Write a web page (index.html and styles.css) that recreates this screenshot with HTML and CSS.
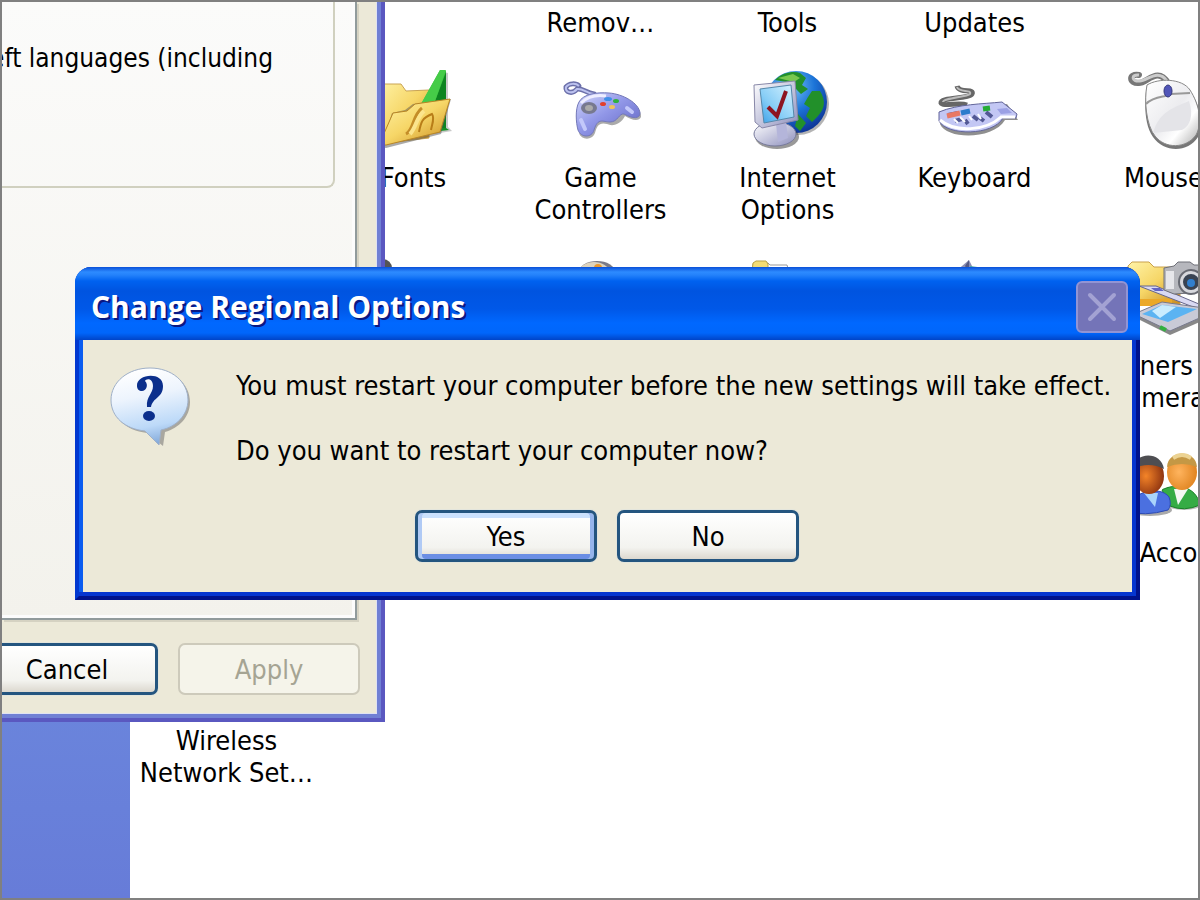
FILE: index.html
```html
<!DOCTYPE html>
<html lang="en">
<head>
<meta charset="utf-8">
<title>Change Regional Options</title>
<link rel="stylesheet" href="styles.css">
</head>
<body>
<div class="desktop">
  <div class="explorer">
    <aside class="task-pane"></aside>
    <main class="folder-view">
      <ul class="icon-grid">
        <li></li><li></li>
        <li class="item scrolled"><span class="label">Remov…</span></li>
        <li class="item scrolled"><span class="label">Tools</span></li>
        <li class="item scrolled"><span class="label">Updates</span></li>
        <li></li>

        <li></li>
        <li class="item">
          <svg class="icon" viewBox="0 0 80 80">
            <defs>
              <linearGradient id="fold" x1="0" y1="0" x2="1" y2="1"><stop offset="0" stop-color="#fff3a8"/><stop offset=".5" stop-color="#f6d667"/><stop offset="1" stop-color="#c98a1c"/></linearGradient>
              <linearGradient id="green" x1="0" y1="0" x2="1" y2="1"><stop offset="0" stop-color="#5ee05a"/><stop offset="1" stop-color="#0b8a1c"/></linearGradient>
            </defs>
            <path d="M70 2 74 3V57L78 61 60 64 68 56V30H46Z" fill="#777" opacity=".4"/>
            <path d="M2 14H27L32 21 55 20V68L4 74Z" fill="url(#fold)" stroke="#c9a455"/>
            <path d="M66 0 72 1V58L75 60 58 62 67 56V24L60 34H47Z" fill="url(#green)"/>
            <path d="M60 34 72 2V58H60Z" fill="#0d8420"/>
            <path d="M66 0H72L60 34H47Z" fill="#45cc48"/>
            <path d="M8 77 12 62 18 43 31 40 39 34 77 29 67 64 12 78Z" fill="#555" opacity=".5"/>
            <path d="M5 75 19 43 33 41 41 34 76 29 66 62 12 75Z" fill="url(#fold)" stroke="#b98625"/>
            <path d="M32 64C40 60 38 46 48 38" fill="none" stroke="#c48d28" stroke-width="3"/>
            <path d="M45 62C47 52 48 48 58 44C61 48 58 54 57 60" fill="none" stroke="#b87d18" stroke-width="2"/>
            <path d="M36 64C42 58 42 48 50 41" fill="none" stroke="#fbe48c" stroke-width="4"/>
          </svg>
          <span class="label">Fonts</span>
        </li>
        <li class="item">
          <svg class="icon" viewBox="0 0 80 80">
            <defs><linearGradient id="pad" x1="0" y1="0" x2="1" y2="1"><stop offset="0" stop-color="#d4d8fa"/><stop offset=".45" stop-color="#9298e8"/><stop offset="1" stop-color="#5c60c0"/></linearGradient></defs>
            <path d="M20 30C30 22 52 22 64 28C74 32 81 42 80 47C78 52 70 50 64 46C60 54 52 57 46 54C38 52 36 56 34 63C31 71 20 70 18 63Z" fill="#555" opacity=".5"/>
            <path d="M33 24C25 23 22 18 16 19C11 25 4 22 5 17C8 13 15 13 18 16" fill="none" stroke="#6c70aa" stroke-width="5" stroke-linecap="round"/>
            <path d="M33 24C25 23 22 18 16 19C11 25 4 22 5 17C8 13 15 13 18 16" fill="none" stroke="#bcc2ef" stroke-width="2"/>
            <path d="M18 32C22 24 36 22 48 23C62 24 78 33 79 43C79 49 72 49 63 44C58 43 57 52 49 52C42 52 37 47 33 60C31 68 20 68 17 60C15 53 14 39 18 32Z" fill="url(#pad)" stroke="#7378b8"/>
            <path d="M20 33C28 25 38 25 45 26" fill="none" stroke="#eef" stroke-width="3"/>
            <ellipse cx="28" cy="38" rx="8" ry="6" fill="#77798f"/><ellipse cx="28" cy="38" rx="4" ry="3" fill="#aaa"/>
            <ellipse cx="42" cy="34" rx="3" ry="2" fill="#e2402c"/><ellipse cx="47" cy="29" rx="4" ry="2" fill="#3f8fe8"/><ellipse cx="55" cy="31" rx="3" ry="2" fill="#2fb13f"/><ellipse cx="51" cy="37" rx="3" ry="2" fill="#f0c45c"/>
            <path d="M20 50 24 59M66 38 71 42" stroke="#c3c8fa" stroke-width="4" stroke-linecap="round"/>
          </svg>
          <span class="label">Game<br>Controllers</span>
        </li>
        <li class="item">
          <svg class="icon" viewBox="0 0 80 80">
            <defs>
              <radialGradient id="globe" cx=".4" cy=".25" r=".8"><stop offset="0" stop-color="#7cc8f8"/><stop offset=".5" stop-color="#1c74d8"/><stop offset="1" stop-color="#0c2f90"/></radialGradient>
              <linearGradient id="screen" x1="1" y1="0" x2="0" y2="1"><stop offset="0" stop-color="#d9f3ff"/><stop offset=".6" stop-color="#86cdf6"/><stop offset="1" stop-color="#3a9fe8"/></linearGradient>
              <linearGradient id="metal" x1="0" y1="0" x2="1" y2="1"><stop offset="0" stop-color="#fff"/><stop offset="1" stop-color="#8d8fbd"/></linearGradient>
            </defs>
            <circle cx="50" cy="34" r="31" fill="#444" opacity=".4"/>
            <circle cx="48" cy="32" r="31" fill="url(#globe)"/>
            <path d="M27 10C35 2 46 1 52 3L58 8 54 15 60 19 53 24 48 19 38 12ZM64 21 72 21C78 31 77 38 70 46L64 52 58 46 62 38 56 34 60 27ZM50 44 58 53 52 61 47 56Z" fill="#22902a"/>
            <path d="M30 8 45 4 52 8 46 12Z" fill="#79c850"/>
            <ellipse cx="29" cy="67" rx="22" ry="12" fill="#333" opacity=".5"/>
            <ellipse cx="27" cy="64" rx="21" ry="12" fill="url(#metal)" stroke="#777a9b"/>
            <path d="M28 54 38 52 40 68 30 72Z" fill="#b4b5da"/>
            <path d="M6 15 47 11 50 50 14 58 7 52Z" fill="url(#metal)" stroke="#8888a8"/>
            <path d="M12 19 43 15 46 47 16 53Z" fill="url(#screen)" stroke="#58a"/>
            <path d="M20 37 29 46 38 21" fill="none" stroke="#8d1420" stroke-width="4"/>
          </svg>
          <span class="label">Internet<br>Options</span>
        </li>
        <li class="item">
          <svg class="icon" viewBox="0 0 80 80">
            <path d="M22 16C24 24 40 18 37 24C34 29 5 27 6 33C8 37 24 32 32 35" fill="none" stroke="#666" stroke-width="5"/>
            <path d="M22 17C24 23 37 19 35 24C32 27 8 28 8 32" fill="none" stroke="#bbb" stroke-width="2"/>
            <path d="M6 43C25 38 50 39 72 34L83 50 70 50C58 70 12 70 5 54Z" fill="#444" opacity=".6"/>
            <path d="M4 42C23 34 48 34 67 32L82 44 81 48 68 48C58 66 12 66 4 51Z" fill="#c3c7f4" stroke="#62659a"/>
            <path d="M5 50C20 63 51 61 66 47L80 47" fill="none" stroke="#fff" stroke-width="3"/>
            <path d="M13 45 23 43M20 51 27 49M38 46 43 50M51 42 57 47M30 50 33 54M45 48 49 51" stroke="#535994" stroke-width="4"/>
            <path d="M12 46 25 43" stroke="#e97864" stroke-width="5"/><path d="M26 43 35 41" stroke="#2b7ccc" stroke-width="5"/><path d="M48 39 55 38" stroke="#25ad35" stroke-width="5"/>
            <path d="M19 49 23 53M25 47 30 52M34 46 37 50M43 44 46 49" stroke="#fff" stroke-width="2"/>
            <path d="M62 39 72 38 77 43 66 44Z" fill="#9ba0e4"/>
          </svg>
          <span class="label">Keyboard</span>
        </li>
        <li class="item">
          <svg class="icon" viewBox="0 0 80 80">
            <defs><linearGradient id="shell" x1="0" y1="0" x2="1" y2="1"><stop offset="0" stop-color="#fff"/><stop offset=".5" stop-color="#ececef"/><stop offset=".7" stop-color="#fff"/><stop offset="1" stop-color="#aaa"/></linearGradient></defs>
            <path d="M44 13C34 -4 23 13 15 13C5 14 4 3 15 5" fill="none" stroke="#777" stroke-width="6" stroke-linecap="round"/>
            <path d="M43 11C34 -2 23 11 16 11C7 12 7 4 15 5" fill="none" stroke="#ccc" stroke-width="3"/>
            <path d="M23 15C34 8 60 10 67 22C76 36 80 54 74 67C64 83 40 83 29 67C20 55 20 30 23 15Z" fill="#777"/>
            <path d="M23 15C34 8 58 8 66 20C75 34 79 52 72 65C62 79 41 79 31 66C22 55 20 30 23 15Z" fill="url(#shell)" stroke="#888"/>
            <path d="M22 34C31 25 41 28 47 24L66 23" fill="none" stroke="#999" stroke-width="2"/>
            <path d="M29 63C35 43 46 39 65 31C70 46 66 56 58 60Z" fill="#e4e4e8"/>
            <ellipse cx="44" cy="21" rx="4" ry="6" fill="#5155b8" stroke="#33367c"/>
          </svg>
          <span class="label">Mouse</span>
        </li>

        <li></li>
        <li class="item"><svg class="icon" viewBox="0 0 80 80"><circle cx="9" cy="10" r="9" fill="#555"/></svg></li>
        <li class="item"><svg class="icon" viewBox="0 0 80 80"><ellipse cx="36" cy="14" rx="18" ry="11" fill="#7b7a86"/><ellipse cx="33" cy="14" rx="15" ry="10" fill="#ddd3bd"/><circle cx="37" cy="10" r="4" fill="#e8962c"/></svg></li>
        <li class="item"><svg class="icon" viewBox="0 0 80 80"><path d="M5 12V6L8 5H20L22 7H39L41 14Z" fill="#fff" stroke="#999"/><path d="M4 14 5 5 8 3H18L20 6V14Z" fill="#f3dc74" stroke="#b9a144"/></svg></li>
        <li class="item"><svg class="icon" viewBox="0 0 80 80"><path d="M20 14 34 2 40 14Z" fill="#8c8fb4"/><path d="M30 8 34 2V14Z" fill="#555a82"/><path d="M35 8 50 10V14H35Z" fill="#48a9a5"/></svg></li>
        <li class="item">
          <svg class="icon" viewBox="0 0 80 80">
            <path d="M4 8 8 4H25L30 9H56V46H4Z" fill="url(#fold)" stroke="#c9a14c"/>
            <path d="M16 41H48V48H16Z" fill="#eba827"/>
            <path d="M15 28 32 28 82 49V54Z" fill="#d9d9f2" stroke="#65658a"/>
            <path d="M27 30H36L40 33H31Z" fill="#6365c4"/>
            <path d="M10 59 37 46 80 52 80 62 46 77Z" fill="#555" opacity=".7"/>
            <path d="M10 56 38 44 80 50V58L46 73Z" fill="#c9cad6" stroke="#77798d"/>
            <path d="M18 56 38 47 73 51 44 64Z" fill="#5bb3f2"/><path d="M28 53 38 47 52 49 36 60Z" fill="#c9ecff"/>
            <path d="M36 69 42 72" stroke="#32b03f" stroke-width="4"/>
            <path d="M40 10 50 8 54 4H66L70 7H82V34L50 36 40 32Z" fill="#b6b7bd" stroke="#6f7078"/>
            <path d="M42 13H50V31H42Z" fill="#e6e6ea"/>
            <circle cx="67" cy="24" r="12" fill="#d7d8dd" stroke="#686a73" stroke-width="2"/><circle cx="67" cy="24" r="8" fill="#394353"/><circle cx="67" cy="25" r="4" fill="#317fce"/>
          </svg>
          <span class="label">Scanners and<br>Cameras</span>
        </li>

        <li></li><li></li><li></li><li></li><li></li>
        <li class="item">
          <svg class="icon" viewBox="0 0 80 80">
            <defs>
              <radialGradient id="skinA" cx=".4" cy=".5" r=".6"><stop offset="0" stop-color="#f48428"/><stop offset="1" stop-color="#8f3410"/></radialGradient>
              <radialGradient id="skinB" cx=".4" cy=".5" r=".6"><stop offset="0" stop-color="#ffb45e"/><stop offset="1" stop-color="#e08420"/></radialGradient>
            </defs>
            <ellipse cx="26" cy="65" rx="22" ry="6" fill="#555" opacity=".5"/>
            <ellipse cx="60" cy="60" rx="17" ry="5" fill="#555" opacity=".4"/>
            <path d="M38 45C50 38 72 40 76 60Q60 67 46 61Z" fill="#35ac45" stroke="#188025"/>
            <path d="M50 44H64L54 60Z" fill="#f4f8f4"/>
            <path d="M2 66C6 46 36 40 45 52Q48 60 44 65Q20 72 2 66Z" fill="#4b70e0" stroke="#2d4bb4"/>
            <path d="M20 48H34L31 62Z" fill="#a9d4fb"/>
            <ellipse cx="25" cy="31" rx="15" ry="18" fill="url(#skinA)"/>
            <path d="M8 24C10 7 37 5 40 24Q25 16 8 24Z" fill="#4e4e52"/>
            <ellipse cx="58" cy="27" rx="15" ry="18" fill="url(#skinB)"/>
            <path d="M43 22C44 4 72 4 73 22Q58 16 43 22Z" fill="#c49845"/><path d="M49 13Q58 7 67 13" fill="none" stroke="#ecd393" stroke-width="4"/>
          </svg>
          <span class="label">User Accounts</span>
        </li>

        <li class="item"><span class="icon"></span><span class="label">Wireless<br>Network Set…</span></li>
      </ul>
    </main>
  </div>

  <section class="properties-window">
    <div class="tab-page">
      <div class="group-box"><span class="group-text">left languages (including</span></div>
    </div>
    <div class="properties-actions">
      <button class="xp-button" type="button">Cancel</button>
      <button class="xp-button" type="button" disabled>Apply</button>
    </div>
  </section>

  <section class="dialog" role="dialog" aria-labelledby="dialog-title">
    <header class="title-bar">
      <h1 class="title" id="dialog-title">Change Regional Options</h1>
      <button class="close" type="button" aria-label="Close" disabled>
        <svg class="close-mark" viewBox="0 0 30 30"><path d="M3 3 27 27M27 3 3 27" stroke="#a3a2d3" stroke-width="4" stroke-linecap="round"/></svg>
      </button>
    </header>
    <div class="dialog-body">
      <div class="message">
        <svg class="question" viewBox="0 0 80 80">
          <defs><linearGradient id="bubble" x1=".4" y1="0" x2=".6" y2="1"><stop offset="0" stop-color="#fff"/><stop offset=".35" stop-color="#edf4fd"/><stop offset=".75" stop-color="#bcd9f8"/><stop offset="1" stop-color="#7fa6d8"/></linearGradient></defs>
          <path d="M41 3C63 3 80 16 80 35C80 50 69 61 55 65L53 79 37 66C15 63 3 51 3 35C3 16 19 3 41 3Z" fill="#666" opacity=".5"/>
          <path d="M40 1C62 1 78 15 78 33C78 48 66 60 51 63L49 78 35 64C15 62 1 50 1 33C1 15 18 1 40 1Z" fill="url(#bubble)" stroke="#9fb0c8"/>
          <path d="M27 19C26 7 53 4 53 19C53 31 43 30 41 40H37C36 29 43 27 43 19C43 11 36 11 35 14C39 18 36 24 32 24C29 24 27 22 27 19Z" fill="#0b2f8c"/>
          <ellipse cx="39" cy="49" rx="6" ry="5" fill="#0b2f8c"/>
        </svg>
        <div class="message-text">
          <p>You must restart your computer before the new settings will take effect.</p>
          <p>Do you want to restart your computer now?</p>
        </div>
      </div>
      <div class="dialog-actions">
        <button class="xp-button default" type="button">Yes</button>
        <button class="xp-button" type="button">No</button>
      </div>
    </div>
  </section>
</div>
</body>
</html>
```
FILE: styles.css
```css
* { box-sizing: border-box; }

body {
  margin: 0;
  font: 27px/32px "DejaVu Sans Condensed", "DejaVu Sans", Tahoma, sans-serif;
  color: #000;
}

.desktop {
  position: relative;
  height: 100vh;
  border: 2px solid #808080;
  background: #fff;
  overflow: hidden;
}

.explorer { display: flex; height: 100%; }

.task-pane {
  flex: 0 0 128px;
  background: linear-gradient(#7ba2e7, #6880da 90%, #677cd8);
}

.folder-view { flex: 1; overflow: hidden; padding-left: 3px; }

.icon-grid {
  display: grid;
  grid-template-columns: repeat(5, 187px) 191px;
  grid-auto-rows: 187px 188px;
  margin: -127px 0 0;
  padding: 0;
  list-style: none;
}

.item {
  display: flex;
  flex-direction: column;
  align-items: center;
  gap: 12px;
  padding-top: 8px;
  text-align: center;
  white-space: nowrap;
}

.item.scrolled { justify-content: flex-end; padding-bottom: 23px; }

.icon { display: block; flex: none; width: 80px; height: 80px; overflow: visible; }

.properties-window {
  position: absolute;
  left: 0;
  top: 0;
  display: flex;
  flex-direction: column;
  width: 383px;
  height: 720px;
  background: #ece9d8;
  border-right: 4px solid #5a58c0;
  border-bottom: 4px solid #5a58c0;
  box-shadow: inset -4px -4px #7080d4, inset -5px -5px #dfe2f2;
  overflow: hidden;
}

.tab-page {
  flex: 1;
  margin-right: 24px;
  padding-right: 20px;
  border-right: 2px solid #919b9c;
  border-bottom: 2px solid #919b9c;
  background: linear-gradient(#fbfbfa, #f3f2ec);
  box-shadow: inset -3px -3px #fcfcfc, 2px 2px #d5d2c2;
}

.group-box {
  display: flex;
  justify-content: flex-end;
  padding: 40px 60px 112px 0;
  border-right: 2px solid #d0d0bf;
  border-bottom: 2px solid #d0d0bf;
  border-bottom-right-radius: 8px;
}

.group-text { flex: none; font-size: 26px; white-space: nowrap; }

.properties-actions {
  display: flex;
  flex: none;
  justify-content: flex-end;
  gap: 20px;
  padding: 23px 21px 23px 0;
}

.xp-button {
  flex: none;
  width: 182px;
  height: 52px;
  padding: 2px 0 0;
  border: 3px solid #24557f;
  border-radius: 7px;
  background: linear-gradient(#fff, #f3f3ef 75%, #dcd8cf);
  box-shadow: 0 0 0 1px #e3e5dc;
  font: inherit;
  color: #000;
}

.xp-button.default {
  box-shadow: inset 4px 0 #b0caf5, inset -4px 0 #96b5ec, inset 0 5px #cbe1fd, inset 0 -5px #6b8ee4, 0 0 0 1px #e3e5dc;
}

.xp-button:disabled {
  border: 2px solid #cdcabb;
  background: #f5f4ea;
  box-shadow: none;
  color: #a5a493;
}

.dialog {
  position: absolute;
  left: 73px;
  right: 58px;
  top: 265px;
  padding: 0 4px 4px;
  border: 4px solid;
  border-top: 0;
  border-color: #0138d0 #00128c #00128c #0138d0;
  border-radius: 16px 16px 0 0;
  background: #0535d0;
}

.title-bar {
  display: flex;
  align-items: center;
  justify-content: space-between;
  height: 73px;
  margin: 0 -8px;
  padding: 6px 12px 0 16px;
  border-radius: 16px 16px 0 0;
  background: linear-gradient(#0a50d8 0, #2d8bff 5px, #2482fb 8px, #0062f0 14px, #0054e0 24px, #0058e8 42px, #0068ff 56px, #0066fb 66px, #0044c8 73px);
}

.title {
  margin: 0;
  font: bold 30px/36px "Open Sans", "Noto Sans", sans-serif;
  color: #fff;
  text-shadow: 2px 2px #0a1883;
}

.close {
  display: grid;
  place-items: center;
  width: 52px;
  height: 52px;
  padding: 0;
  border: 2px solid #9294d4;
  border-radius: 6px;
  background: #7474b8;
}

.close-mark { width: 30px; height: 30px; }

.dialog-body {
  padding: 27px 20px 30px 27px;
  background: #ece9d8;
  box-shadow: -4px 0 #0a5cf0;
}

.message { display: flex; gap: 46px; }

.question { flex: none; width: 80px; height: 80px; overflow: visible; }

.message-text { display: grid; gap: 33px; padding: 3px 0 13px; }

.message-text p { margin: 0; white-space: nowrap; }

.dialog-actions { display: flex; justify-content: center; gap: 20px; padding: 30px 8px 0 0; }
```
